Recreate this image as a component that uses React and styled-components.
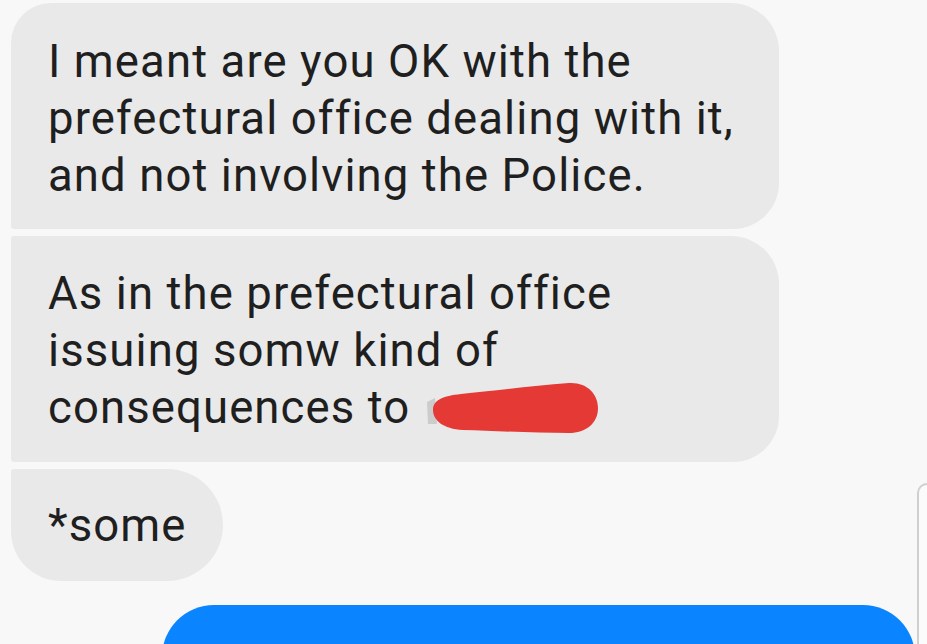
import React from "react";
import styled, { createGlobalStyle } from "styled-components";

const Global = createGlobalStyle`
  html, body { margin: 0; padding: 0; background: #f8f8f8; }
  body { width: 927px; height: 644px; overflow: hidden; }
`;

const Screen = styled.div`
  position: relative;
  width: 927px;
  height: 644px;
  overflow: hidden;
  background: #f8f8f8;
  font-family: Roboto, "Noto Sans", sans-serif;
`;

const Thread = styled.div`
  display: flex;
  flex-direction: column;
  align-items: flex-start;
  padding: 3px 12px 0 11px;
`;

const Group = styled.div`
  display: flex;
  flex-direction: column;
  align-items: flex-start;
  gap: 7px;
`;

const Bubble = styled.div`
  box-sizing: border-box;
  background: #e9e9e9;
  color: #1f1f1f;
  font-size: 45.5px;
  line-height: 57px;
  letter-spacing: 1.1px;
  white-space: nowrap;
  padding: ${(p) => p.$pad || "30px 30px 25px 37px"};
  width: ${(p) => p.$w || "auto"};
  border-radius: ${(p) => p.$radius};
`;

const Redact = styled.span`
  display: inline-block;
  position: relative;
  width: 172px;
  height: 40px;
  vertical-align: -6px;
  margin-left: 4px;
`;

const Scribble = styled.svg`
  position: absolute;
  left: 0;
  top: -11px;
  overflow: visible;
`;

const Outgoing = styled.div`
  align-self: flex-end;
  margin-top: 24px;
  width: 753px;
  height: 80px;
  background: #0a84ff;
  border-radius: 52px 52px 0 0;
`;

const EdgePanel = styled.div`
  position: absolute;
  left: 917px;
  top: 483px;
  width: 30px;
  height: 200px;
  border-left: 2px solid #cfcfcf;
  border-top: 2px solid #cfcfcf;
  border-top-left-radius: 10px;
  background: #fbfbfb;
`;

export default function App() {
  return (
    <Screen>
      <Global />
      <Thread>
        <Group>
          <Bubble $w="768px" $radius="40px 48px 46px 3px">
            I meant are you OK with the
            <br />
            prefectural office dealing with it,
            <br />
            and not involving the Police.
          </Bubble>
          <Bubble $w="768px" $pad="29px 30px 26px 37px" $radius="3px 48px 46px 3px">
            As in the prefectural office
            <br />
            issuing somw kind of
            <br />
            consequences to{" "}
            <Redact>
              <Scribble width="172" height="56" viewBox="0 0 172 56">
                <path d="M0 24 L8 20 L10 46 L1 46 Z" fill="#b5b5b5" opacity="0.55" />
                <path
                  d="M6 32 C6 22 16 18 34 16 C64 13 104 8 142 5 C160 4 171 16 171 30 C171 45 159 55 142 55 C108 55 68 53 36 52 C16 51 6 42 6 32 Z"
                  fill="#e53935"
                />
              </Scribble>
            </Redact>
          </Bubble>
          <Bubble $pad="28px 36px 27px 37px" $radius="3px 56px 56px 50px">
            *some
          </Bubble>
        </Group>
        <Outgoing />
      </Thread>
      <EdgePanel />
    </Screen>
  );
}
